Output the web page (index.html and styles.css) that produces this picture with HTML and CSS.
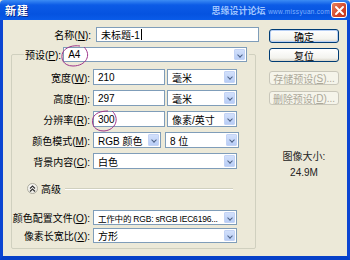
FILE: index.html
```html
<!doctype html>
<html lang="zh-CN">

<head>
    <meta charset="UTF-8">
    <title>新建</title>
    <link rel="stylesheet" href="styles.css">
</head>

<body>
    <div class="window">
        <div class="titlebar">
            <span class="title">新建</span>
            <span class="mark">思缘设计论坛 <small>www.missyuan.com</small></span>
            <span class="close">
                <svg width="11" height="11" viewBox="0 0 11 11"><path d="M2 2 L9 9 M9 2 L2 9" stroke="#fff" stroke-width="2" stroke-linecap="round"/></svg>
            </span>
        </div>
        <div class="frame">
            <div class="main">
                <div class="row name-row">
                    <span class="lbl">名称(<u>N</u>):</span>
                    <div class="field name">未标题-1<span class="caret"></span></div>
                </div>
                <fieldset class="group">
                    <legend class="legend">
                        <span class="lbl-inline">预设(<u>P</u>):</span>
                        <div class="select preset"><span class="val">A4</span><i class="arrow"></i></div>
                    </legend>
                    <div class="row">
                        <span class="lbl">宽度(<u>W</u>):</span>
                        <div class="field num">210</div>
                        <div class="select unit"><span class="val">毫米</span><i class="arrow"></i></div>
                    </div>
                    <div class="row">
                        <span class="lbl">高度(<u>H</u>):</span>
                        <div class="field num">297</div>
                        <div class="select unit"><span class="val">毫米</span><i class="arrow"></i></div>
                    </div>
                    <div class="row">
                        <span class="lbl">分辨率(<u>R</u>):</span>
                        <div class="field num">300</div>
                        <div class="select unit"><span class="val">像素/英寸</span><i class="arrow"></i></div>
                    </div>
                    <div class="row">
                        <span class="lbl">颜色模式(<u>M</u>):</span>
                        <div class="select mode"><span class="val">RGB 颜色</span><i class="arrow"></i></div>
                        <div class="select bits"><span class="val">8 位</span><i class="arrow"></i></div>
                    </div>
                    <div class="row">
                        <span class="lbl">背景内容(<u>C</u>):</span>
                        <div class="select full"><span class="val">白色</span><i class="arrow"></i></div>
                    </div>
                    <div class="advanced">
                        <span class="toggle">
                            <svg width="7" height="7" viewBox="0 0 7 7"><path d="M1 3.5 L3.5 1 L6 3.5 M1 6.5 L3.5 4 L6 6.5" fill="none" stroke="#333" stroke-width="1.2"/></svg>
                        </span>
                        <span class="adv-text">高级</span>
                        <span class="rule"></span>
                    </div>
                    <div class="row profile">
                        <span class="lbl">颜色配置文件(<u>O</u>):</span>
                        <div class="select full"><span class="val small">工作中的 RGB: sRGB IEC6196...</span><i class="arrow"></i></div>
                    </div>
                    <div class="row aspect">
                        <span class="lbl">像素长宽比(<u>X</u>):</span>
                        <div class="select full"><span class="val">方形</span><i class="arrow"></i></div>
                    </div>
                </fieldset>
            </div>
            <div class="side">
                <div class="btn default">确定</div>
                <div class="btn reset">复位</div>
                <div class="btn off save">存储预设(<u>S</u>)...</div>
                <div class="btn off del">删除预设(<u>D</u>)...</div>
                <div class="info">
                    <div>图像大小:</div>
                    <div class="size">24.9M</div>
                </div>
            </div>
        </div>
        <svg class="marks" width="350" height="260" viewBox="0 0 350 260">
            <path d="M84 47 C92 55 86 66 73 66 C63 66 60 58 63 52 C66 47 73 45 80 46" fill="none" stroke="#a0368c" stroke-width="1"/>
            <path d="M112 111 C120 118 116 130 104 131 C95 131 91 125 93 118 C95 113 101 111 108 111" fill="none" stroke="#a0368c" stroke-width="1"/>
        </svg>
    </div>
</body>

</html>
```

FILE: styles.css
```css
* {
    margin: 0;
    padding: 0;
    box-sizing: border-box;
}

body {
    width: 350px;
    height: 260px;
    overflow: hidden;
    font-family: "Liberation Sans", "Noto Sans CJK SC", sans-serif;
    font-size: 10px;
    color: #000;
}

.window {
    position: relative;
    width: 350px;
    height: 260px;
    display: flex;
    flex-direction: column;
    background: #ece9d8;
}

.titlebar {
    height: 20px;
    display: flex;
    align-items: center;
    padding: 0 3px 0 5px;
    background: linear-gradient(#3c8cf4, #0c5be6 25%, #0553e0 70%, #0a5ce9);
    border-radius: 4px 4px 0 0;
}

.title {
    color: #fff;
    font-weight: bold;
    font-size: 11px;
    text-shadow: 1px 1px 0 #0a2a8a;
    letter-spacing: 1px;
}

.mark {
    margin-left: auto;
    color: #9ec4ff;
    font-size: 9px;
    font-weight: bold;
    white-space: nowrap;
}

.mark small {
    font-size: 6.5px;
    font-weight: normal;
    color: #7fb0ff;
    letter-spacing: 0.3px;
}

.close {
    width: 16px;
    height: 16px;
    margin-left: 1px;
    display: flex;
    align-items: center;
    justify-content: center;
    border: 1px solid #fff;
    border-radius: 3px;
    background: linear-gradient(135deg, #e7835f, #d2452a 60%, #c1361e);
}

.frame {
    flex: 1;
    display: flex;
    border-left: 3px solid #0b45d2;
    border-right: 3px solid #0b45d2;
    border-bottom: 4px solid #0640c8;
}

.main {
    width: 258px;
}

.row {
    display: flex;
    align-items: center;
    gap: 2px;
    height: 16px;
    margin-top: 5px;
}

.lbl {
    width: 79px;
    padding-right: 1px;
    text-align: right;
    white-space: nowrap;
}

.name-row {
    margin-top: 7px;
    height: 15px;
}

.name-row .lbl {
    width: 89px;
}

.field,
.select {
    height: 100%;
    border: 1px solid #7f9db9;
    background: #fff;
    display: flex;
    align-items: center;
    padding-left: 4px;
    white-space: nowrap;
    overflow: hidden;
}

.field.name {
    width: 163px;
    margin-left: 2px;
}

.caret {
    display: inline-block;
    width: 1px;
    height: 11px;
    margin-left: 1px;
    background: #000;
}

.field.num {
    width: 72px;
}

.select {
    padding-right: 1px;
}

.select .val {
    flex: 1;
    overflow: hidden;
}

.select .val.small {
    font-size: 8.5px;
    letter-spacing: -0.2px;
}

.arrow {
    flex: none;
    width: 11px;
    height: calc(100% - 2px);
    background: linear-gradient(#d2e0fb, #b8cdf6);
    border: 1px solid #c3d3f5;
    border-radius: 1px;
    position: relative;
}

.arrow::after {
    content: "";
    position: absolute;
    left: 3px;
    top: 3px;
    width: 3px;
    height: 3px;
    border-right: 1.5px solid #4d6185;
    border-bottom: 1.5px solid #4d6185;
    transform: rotate(45deg);
}

.select.unit {
    width: 70px;
}

.select.mode {
    width: 68px;
}

.select.bits {
    width: 74px;
    margin-left: 2px;
}

.select.full {
    width: 144px;
}

.group {
    margin: 5px 0 0 8px;
    width: 245px;
    border: 1px solid #d0d0bf;
    border-radius: 2px;
    padding: 0 0 5px 0;
}

.legend {
    display: flex;
    align-items: center;
    margin-left: 12px;
    padding: 0 2px 0 1px;
    height: 15px;
}

.lbl-inline {
    margin-right: 2px;
}

.select.preset {
    width: 184px;
}

.group > .row:first-of-type {
    margin-top: 7px;
}

.advanced {
    display: flex;
    align-items: center;
    height: 11px;
    margin-top: 14px;
    padding-left: 15px;
}

.toggle {
    width: 11px;
    height: 11px;
    border: 1px solid #b0afa3;
    border-radius: 50%;
    background: radial-gradient(circle at 40% 35%, #fff, #e6e4da);
    display: flex;
    align-items: center;
    justify-content: center;
}

.adv-text {
    margin-left: 3px;
}

.rule {
    width: 168px;
    height: 2px;
    margin-left: 4px;
    border-top: 1px solid #d0d0bf;
    border-bottom: 1px solid #fff;
}

.row.profile {
    margin-top: 16px;
    height: 15px;
}

.row.aspect {
    margin-top: 3px;
    height: 15px;
}

.side {
    flex: 1;
    display: flex;
    flex-direction: column;
    padding-left: 8px;
}

.btn {
    width: 70px;
    height: 14px;
    display: flex;
    align-items: center;
    justify-content: center;
    border: 1px solid #003c74;
    border-radius: 3px;
    background: linear-gradient(#ffffff, #f3f3ee 75%, #d8d4c8);
    white-space: nowrap;
}

.btn.default {
    margin-top: 9px;
    box-shadow: inset 0 0 0 1px #b8d0f5;
}

.btn.reset {
    margin-top: 5px;
}

.btn.off {
    color: #aca899;
    border-color: #c9c7ba;
    background: #f5f4ea;
}

.btn.save {
    margin-top: 9px;
}

.btn.del {
    margin-top: 6px;
}

.info {
    width: 70px;
    margin-top: 46px;
    text-align: center;
    line-height: 12px;
    color: #222;
}

.info .size {
    margin-top: 4px;
}

.marks {
    position: absolute;
    left: 0;
    top: 0;
    pointer-events: none;
}
```
